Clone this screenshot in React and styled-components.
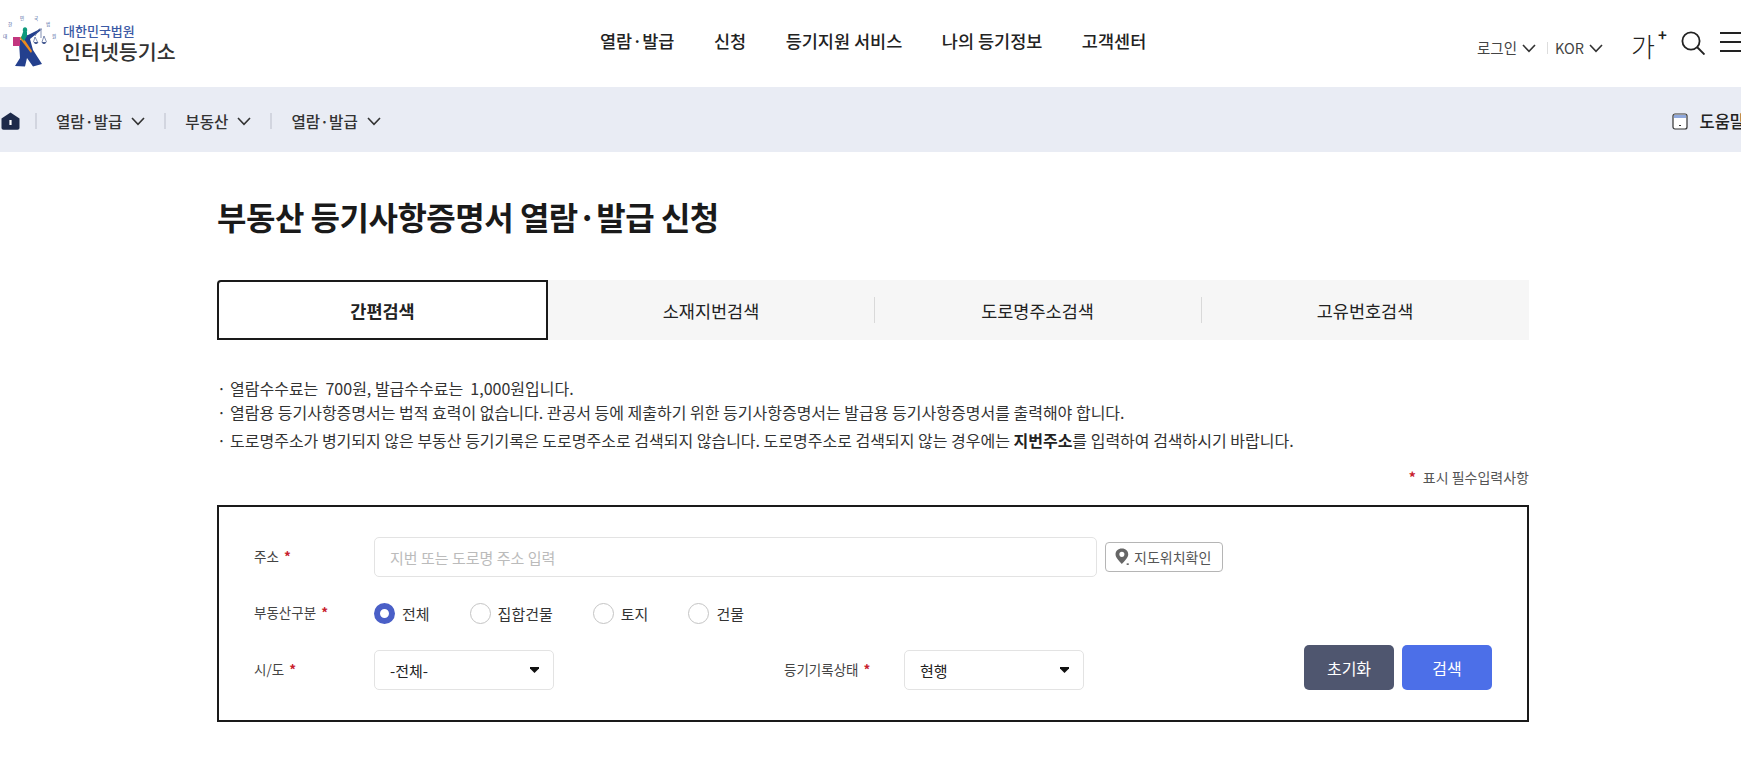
import React from 'react';
import styled, { createGlobalStyle } from 'styled-components';

const GlobalStyle = createGlobalStyle`
    html, body {
        margin: 0;
        padding: 0;
        background: #fff;
        overflow: hidden;
    }

    body {
        font-family: "Noto Sans CJK KR", "Noto Sans", sans-serif;
        color: #222;
    }

    * {
        box-sizing: border-box;
    }
`;

const Logo = () => (
    <svg width="60" height="60" viewBox="0 15 60 60">
        <g fill="#3f5a9a" fontSize="4.6" fontFamily="Noto Sans CJK KR, sans-serif" textAnchor="middle">
            <text x="5" y="40">대</text>
            <text x="10" y="28">한</text>
            <text x="22" y="22">민</text>
            <text x="36" y="22">국</text>
            <text x="48" y="28">법</text>
            <text x="54" y="40">원</text>
        </g>
        <path d="M19 44 L23 38 L28 37 L40 31 L40.6 32.5 L30 41 L33 52 L42 66 L33 68.5 L27 60 L25 68.5 L15 68 L20 60 Z" fill="#24408e" />
        <path d="M13 39 H20 V48 H13 Z" fill="#c2367f" />
        <path d="M19.5 40 L22 38 L32 53 L31 55 Z" fill="#ee8a1d" />
        <path d="M21 40 L23 34 H27 L27 38 L24 43 Z" fill="#0f9a7c" />
        <ellipse cx="25" cy="32" rx="2.2" ry="2.8" fill="#0f9a7c" />
        <path d="M35 38 L39 31 H42 M41 31 V40 M35 39 L33.5 44 M35 39 L37.5 44 M44 38 L42 44 M44 38 L46.5 44" fill="none" stroke="#4b5f94" strokeWidth="0.7" />
        <path d="M33.5 44 H38.5 L37 46 H35 Z M41.5 44 H46.5 L45 46 H43 Z" fill="#4b5f94" />
    </svg>
);

const HomeIcon = () => (
    <svg width="19" height="18" viewBox="0 0 19 18">
        <path d="M0.5 6.5 L9.5 0.5 L18.5 6.5 V16 Q18.5 17.8 16.5 17.8 H2.5 Q0.5 17.8 0.5 16 Z" fill="#1d2a4a" />
        <rect x="8.4" y="8" width="2.2" height="5" fill="#fff" />
    </svg>
);

const Chevron = () => (
    <svg width="14" height="9" viewBox="0 0 14 9">
        <path d="M1 1 L7 7.4 L13 1" fill="none" stroke="#333" strokeWidth="1.6" />
    </svg>
);

const BookIcon = () => (
    <svg width="16" height="17" viewBox="0 0 16 17">
        <rect x="1" y="1" width="14" height="15" rx="2" fill="#fff" stroke="#333" strokeWidth="1.2" />
        <rect x="2" y="2" width="12" height="3" fill="#8fa8dc" />
        <rect x="7" y="12" width="2" height="1" fill="#333" />
    </svg>
);

const SearchIcon = () => (
    <svg width="24" height="24" viewBox="0 0 24 24">
        <circle cx="10" cy="10" r="8.6" fill="none" stroke="#222" strokeWidth="1.8" />
        <path d="M16 16 L23.5 23.5" stroke="#222" strokeWidth="1.9" />
    </svg>
);

const PinIcon = () => (
    <svg width="18" height="18" viewBox="0 0 17 17">
        <path d="M6.5 0.5 C2.8 0.5 0.5 3 0.5 6 C0.5 9.5 4.5 13 6.5 15 C8.5 13 12.5 9.5 12.5 6 C12.5 3 10.2 0.5 6.5 0.5 Z M6.5 3.6 A2.4 2.4 0 1 1 6.5 8.4 A2.4 2.4 0 1 1 6.5 3.6 Z" fill="#666" fillRule="evenodd" />
        <rect x="11" y="14.5" width="2" height="1.5" fill="#666" />
    </svg>
);

const Arrow = () => (
    <svg width="9" height="6" viewBox="0 0 9 6">
        <path d="M0 0 H9 V1.5 L4.5 6 L0 1.5 Z" fill="#111" />
    </svg>
);

export default function App() {
    const tabs = ['간편검색', '소재지번검색', '도로명주소검색', '고유번호검색'];
    const radios = ['전체', '집합건물', '토지', '건물'];

    return (
        <Page>
            <GlobalStyle />
            <Header>
                <LogoBox>
                    <Logo />
                    <LogoText>
                        <small>대한민국법원</small>
                        <strong>인터넷등기소</strong>
                    </LogoText>
                </LogoBox>
                <MainNav>
                    <a>열람·발급</a>
                    <a>신청</a>
                    <a>등기지원 서비스</a>
                    <a>나의 등기정보</a>
                    <a>고객센터</a>
                </MainNav>
                <Utils>
                    <UtilLink>로그인 <Chevron /></UtilLink>
                    <UtilBar />
                    <UtilLink>KOR <Chevron /></UtilLink>
                    <FontSize>가<sup>+</sup></FontSize>
                    <SearchBox><SearchIcon /></SearchBox>
                    <Burger><i /><i /><i /></Burger>
                </Utils>
            </Header>

            <SubNav>
                <HomeIcon />
                <Crumbs>
                    <Crumb>열람·발급 <Chevron /></Crumb>
                    <Crumb>부동산 <Chevron /></Crumb>
                    <Crumb>열람·발급 <Chevron /></Crumb>
                </Crumbs>
                <Help><BookIcon /> 도움말</Help>
            </SubNav>

            <Content>
                <Title>부동산 등기사항증명서 열람·발급 신청</Title>
                <Tabs>
                    {tabs.map((tab, i) => (
                        <Tab key={tab} $active={i === 0} $line={i > 1}>{tab}</Tab>
                    ))}
                </Tabs>
                <Notes>
                    <li>열람수수료는 &nbsp;700원, 발급수수료는 &nbsp;1,000원입니다.</li>
                    <li>열람용 등기사항증명서는 법적 효력이 없습니다. 관공서 등에 제출하기 위한 등기사항증명서는 발급용 등기사항증명서를 출력해야 합니다.</li>
                    <li>도로명주소가 병기되지 않은 부동산 등기기록은 도로명주소로 검색되지 않습니다. 도로명주소로 검색되지 않는 경우에는 <b>지번주소</b>를 입력하여 검색하시기 바랍니다.</li>
                </Notes>
                <Required><Star>*</Star>표시 필수입력사항</Required>

                <FormBox>
                    <Row>
                        <Label>주소 <Star>*</Star></Label>
                        <AddressInput placeholder="지번 또는 도로명 주소 입력" />
                        <MapButton><PinIcon /> 지도위치확인</MapButton>
                    </Row>
                    <RadioRow>
                        <Label>부동산구분 <Star>*</Star></Label>
                        <RadioGroup>
                            {radios.map((radio, i) => (
                                <RadioItem key={radio}>
                                    <RadioDot $checked={i === 0} />
                                    {radio}
                                </RadioItem>
                            ))}
                        </RadioGroup>
                    </RadioRow>
                    <BottomRow>
                        <Label>시/도 <Star>*</Star></Label>
                        <SelectBox>-전체-<Arrow /></SelectBox>
                        <SecondLabel>등기기록상태 <Star>*</Star></SecondLabel>
                        <SelectBox>현행<Arrow /></SelectBox>
                        <Buttons>
                            <ActionButton $bg="#4f566f">초기화</ActionButton>
                            <ActionButton $bg="#4c6fe8">검색</ActionButton>
                        </Buttons>
                    </BottomRow>
                </FormBox>
            </Content>
        </Page>
    );
}

const Page = styled.div`
    width: 1741px;
    height: 774px;
    overflow: hidden;
`;

const Header = styled.header`
    display: flex;
    align-items: flex-start;
    height: 87px;
`;

const LogoBox = styled.div`
    display: flex;
    align-items: center;
    width: 600px;
    height: 72px;
    padding-top: 14px;
`;

const LogoText = styled.div`
    display: flex;
    flex-direction: column;
    margin-left: 2px;

    small {
        margin-left: 1px;
        font-size: 13px;
        line-height: 17px;
        font-weight: 500;
        color: #3b5aa5;
    }

    strong {
        font-size: 20.6px;
        line-height: 25px;
        font-weight: 500;
        color: #333;
    }
`;

const MainNav = styled.nav`
    display: flex;
    gap: 39.5px;
    padding-top: 28px;

    a {
        font-size: 17.5px;
        line-height: 26px;
        font-weight: 500;
        color: #222;
    }
`;

const Utils = styled.div`
    display: flex;
    align-items: center;
    margin-left: auto;
    height: 40px;
    margin-top: 27px;
    color: #444;
`;

const UtilLink = styled.span`
    display: flex;
    align-items: center;
    gap: 5px;
    font-size: 14.5px;
    margin-top: 1px;

    svg {
        margin-top: 2px;
    }
`;

const UtilBar = styled.span`
    width: 1px;
    height: 12px;
    background: #ddd;
    margin: 2px 7px 0 11px;
`;

const FontSize = styled.span`
    position: relative;
    width: 50px;
    margin: 0 0 2px 28px;
    font-size: 26px;
    line-height: 38px;
    font-weight: 300;
    color: #222;

    sup {
        position: absolute;
        top: -4px;
        left: 27px;
        font-size: 15px;
        font-weight: 700;
        line-height: 24px;
    }
`;

const SearchBox = styled.span`
    display: flex;
    margin-bottom: 9px;
`;

const Burger = styled.div`
    display: flex;
    flex-direction: column;
    gap: 7px;
    width: 21px;
    margin: 0 0 10px 15px;

    i {
        display: block;
        height: 2px;
        background: #222;
    }
`;

const SubNav = styled.div`
    display: flex;
    align-items: center;
    height: 65px;
    background: #e9ecf4;
    padding-left: 1px;
    padding-top: 3px;
`;

const Crumbs = styled.div`
    display: flex;
    margin-left: 15px;
`;

const Crumb = styled.div`
    display: flex;
    align-items: center;
    gap: 9px;
    margin-right: 19px;
    padding-left: 21px;
    font-size: 15.6px;
    line-height: 22px;
    font-weight: 500;
    color: #333;
    background: linear-gradient(#d2d5df, #d2d5df) left center / 2px 16px no-repeat;
`;

const Help = styled.div`
    display: flex;
    align-items: center;
    gap: 11px;
    margin-left: auto;
    margin-right: -4px;
    font-size: 16.5px;
    font-weight: 500;
    color: #222;
    white-space: nowrap;
    flex-shrink: 0;
`;

const Content = styled.main`
    width: 1312px;
    margin-left: 217px;
`;

const Title = styled.h1`
    margin: 42px 0 0;
    font-size: 32px;
    line-height: 44px;
    font-weight: 700;
    color: #1a1a1a;
    letter-spacing: -0.5px;
`;

const Tabs = styled.div`
    display: grid;
    grid-template-columns: 331px 326px 327px 328px;
    height: 60px;
    margin-top: 42px;
    background: #f6f6f6;
`;

const Tab = styled.div`
    position: relative;
    display: flex;
    align-items: center;
    justify-content: center;
    font-size: 17.5px;
    color: #222;
    font-weight: ${(props) => (props.$active ? 700 : 400)};
    background: ${(props) => (props.$active ? '#fff' : 'transparent')};
    border: ${(props) => (props.$active ? '2px solid #1a1a1a' : 'none')};
    border-top-left-radius: ${(props) => (props.$active ? '4px' : '0')};

    &::before {
        content: '';
        display: ${(props) => (props.$line ? 'block' : 'none')};
        position: absolute;
        left: 0;
        top: 17px;
        bottom: 17px;
        width: 1px;
        background: #d9d9d9;
    }
`;

const Notes = styled.ul`
    list-style: none;
    margin: 36px 0 0;
    padding: 0;
    font-size: 16px;
    line-height: 24px;
    color: #333;

    li {
        position: relative;
        padding-left: 13px;
    }

    li:last-child {
        margin-top: 4px;
    }

    li::before {
        content: '·';
        position: absolute;
        left: 0;
    }

    b {
        font-weight: 700;
        color: #222;
    }
`;

const Required = styled.div`
    display: flex;
    justify-content: flex-end;
    gap: 7px;
    margin-top: 15px;
    font-size: 14px;
    line-height: 20px;
    color: #555;
`;

const Star = styled.span`
    color: #c8202c;
    font-weight: 700;
    margin-left: 2px;
`;

const FormBox = styled.section`
    height: 217px;
    margin-top: 18px;
    border: 2px solid #1a1a1a;
    padding: 30px 0 0 35px;
`;

const Row = styled.div`
    display: flex;
    align-items: center;
    height: 40px;
`;

const RadioRow = styled(Row)`
    margin-top: 16px;
`;

const BottomRow = styled(Row)`
    margin-top: 17px;
`;

const Label = styled.div`
    width: 120px;
    flex-shrink: 0;
    padding-bottom: 2px;
    font-size: 13.5px;
    color: #444;
`;

const SecondLabel = styled(Label)`
    margin-left: 230px;
`;

const AddressInput = styled.input`
    width: 723px;
    height: 40px;
    border: 1px solid #e3e3e3;
    border-radius: 5px;
    padding: 0 15px;
    font-family: inherit;
    font-size: 15px;

    &::placeholder {
        color: #bbb;
    }
`;

const MapButton = styled.button`
    display: flex;
    align-items: center;
    gap: 1px;
    width: 118px;
    height: 30px;
    margin-left: 8px;
    padding: 0 0 0 9px;
    background: #fff;
    border: 1px solid #b5b5b5;
    border-radius: 4px;
    font-family: inherit;
    font-size: 14px;
    color: #555;
    white-space: nowrap;
`;

const RadioGroup = styled.div`
    display: flex;
    gap: 40px;
`;

const RadioItem = styled.label`
    display: flex;
    align-items: center;
    gap: 7px;
    font-size: 15px;
    color: #333;
`;

const RadioDot = styled.span`
    display: block;
    width: 21px;
    height: 21px;
    border-radius: 50%;
    background: #fff;
    border: ${(props) => (props.$checked ? '6px solid #4a5fc7' : '1px solid #c4c4c4')};
`;

const SelectBox = styled.div`
    display: flex;
    align-items: center;
    justify-content: space-between;
    width: 180px;
    height: 40px;
    flex-shrink: 0;
    border: 1px solid #e3e3e3;
    border-radius: 5px;
    padding: 0 14px 0 15px;
    font-size: 15px;
    color: #222;
`;

const Buttons = styled.div`
    display: flex;
    gap: 8px;
    margin-left: 220px;
    margin-top: -5px;
`;

const ActionButton = styled.button`
    width: 90px;
    height: 45px;
    border: none;
    border-radius: 5px;
    background: ${(props) => props.$bg};
    color: #fff;
    font-family: inherit;
    font-size: 16px;
`;
